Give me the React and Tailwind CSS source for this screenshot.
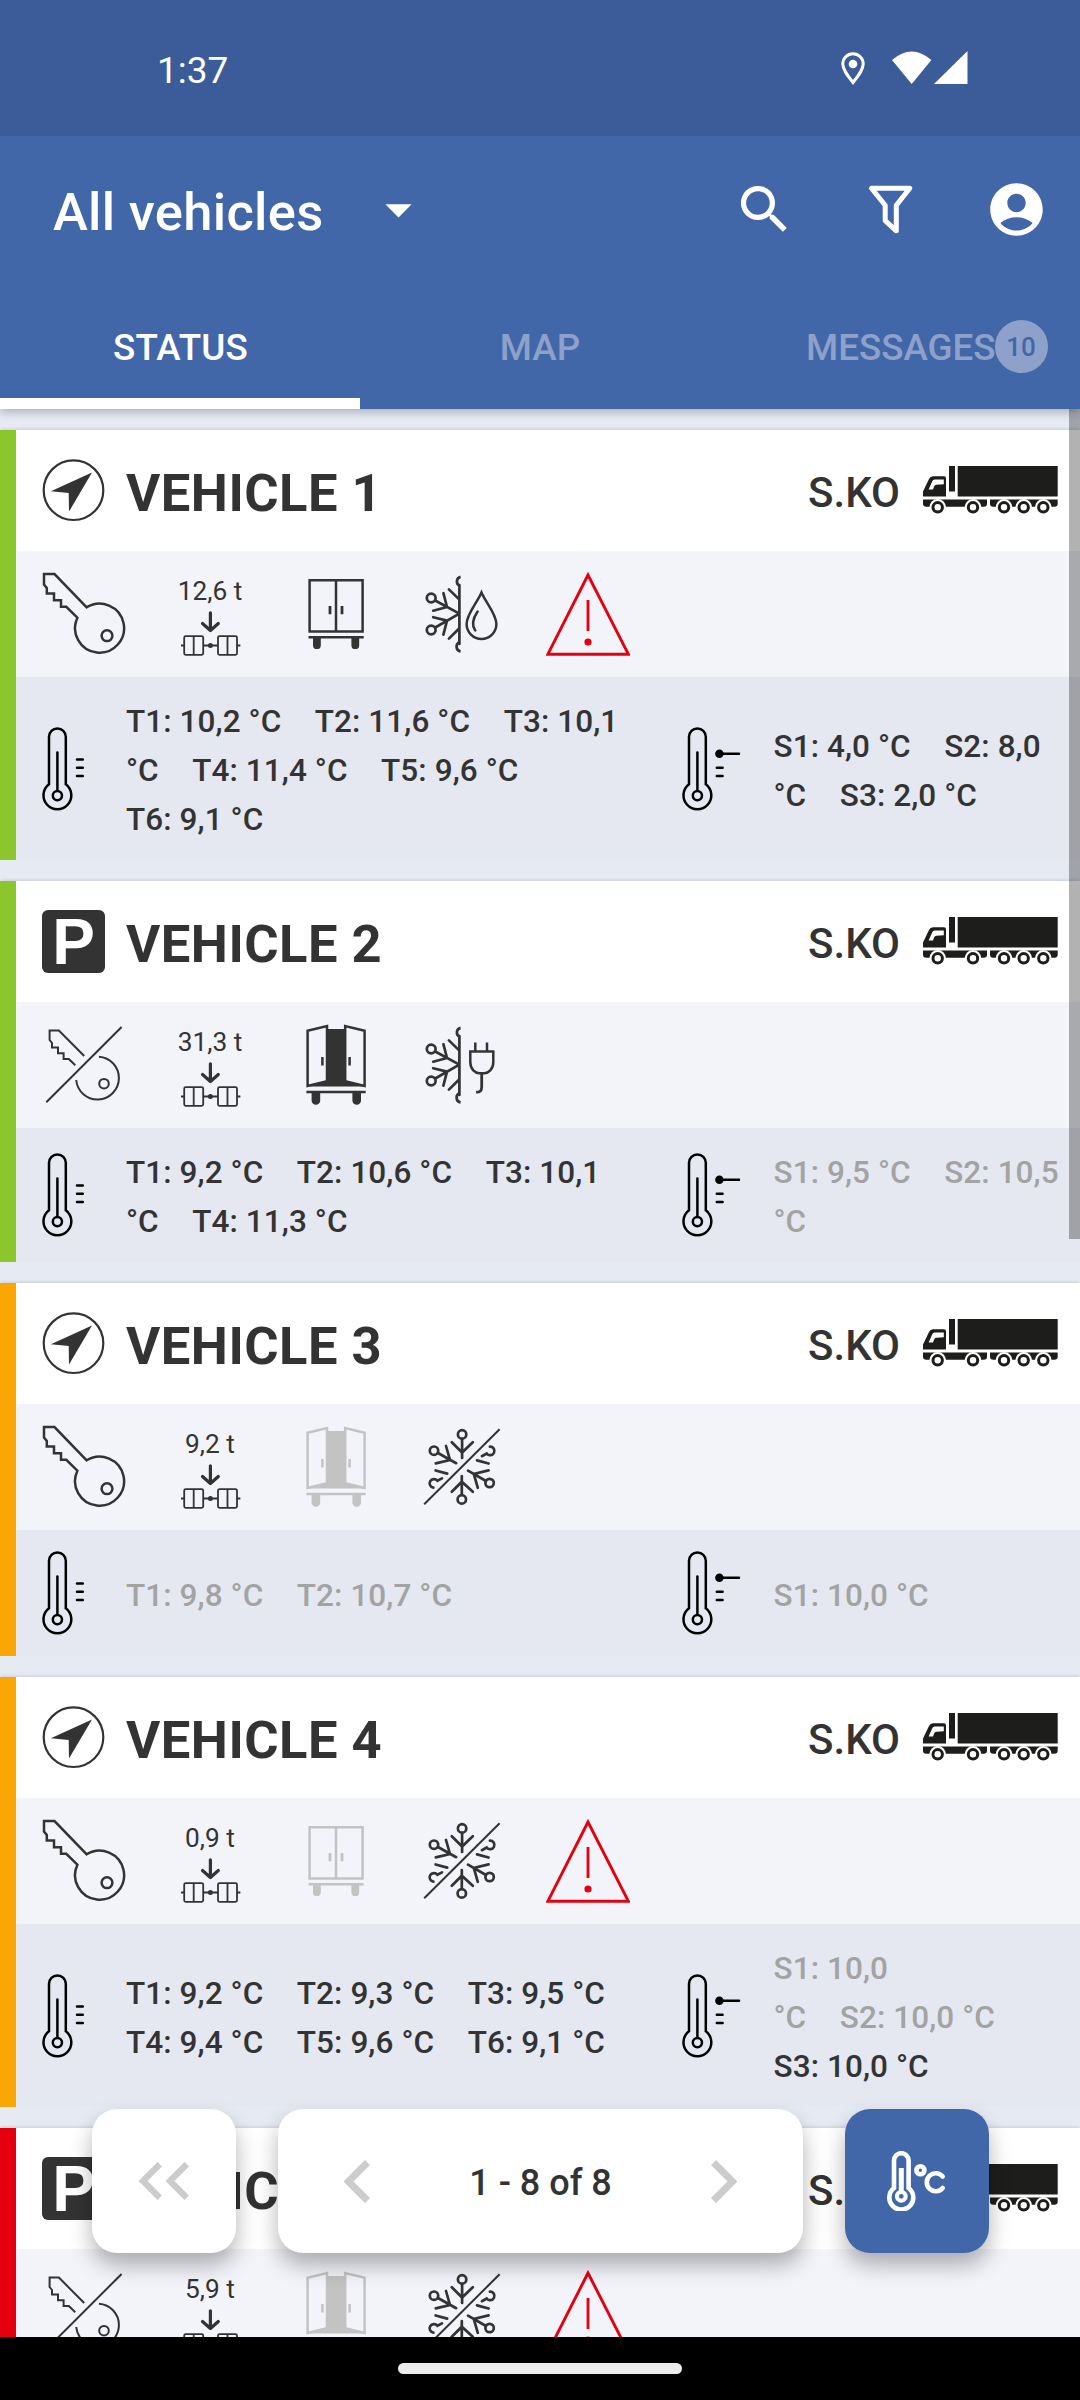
import clsx from "clsx";
import { MdAccountCircle, MdArrowDropDown, MdSearch } from "react-icons/md";

const vehicles = [
	{
		name: "VEHICLE 1",
		bar: "bg-[#8bc72c]",
		moving: true,
		keyOn: true,
		load: "12,6 t",
		door: "closed",
		cooling: "drop",
		warning: true,
		temps: [["T1: 10,2 °C", "T2: 11,6 °C", "T3: 10,1"], ["°C", "T4: 11,4 °C", "T5: 9,6 °C"], ["T6: 9,1 °C"]],
		setpoints: [["S1: 4,0 °C", "S2: 8,0"], ["°C", "S3: 2,0 °C"]],
	},
	{
		name: "VEHICLE 2",
		bar: "bg-[#8bc72c]",
		load: "31,3 t",
		door: "open",
		cooling: "plug",
		temps: [["T1: 9,2 °C", "T2: 10,6 °C", "T3: 10,1"], ["°C", "T4: 11,3 °C"]],
		setpoints: [["S1: 9,5 °C", "S2: 10,5"], ["°C"]],
		oldSetpoints: 2,
	},
	{
		name: "VEHICLE 3",
		bar: "bg-[#faa604]",
		moving: true,
		keyOn: true,
		load: "9,2 t",
		door: "open",
		doorOld: true,
		cooling: "off",
		temps: [["T1: 9,8 °C", "T2: 10,7 °C"]],
		oldTemps: 1,
		setpoints: [["S1: 10,0 °C"]],
		oldSetpoints: 1,
	},
	{
		name: "VEHICLE 4",
		bar: "bg-[#faa604]",
		moving: true,
		keyOn: true,
		load: "0,9 t",
		door: "closed",
		doorOld: true,
		cooling: "off",
		warning: true,
		temps: [["T1: 9,2 °C", "T2: 9,3 °C", "T3: 9,5 °C"], ["T4: 9,4 °C", "T5: 9,6 °C", "T6: 9,1 °C"]],
		setpoints: [["S1: 10,0"], ["°C", "S2: 10,0 °C"], ["S3: 10,0 °C"]],
		oldSetpoints: 2,
	},
	{
		name: "VEHICLE 5",
		bar: "bg-[#e5000f]",
		load: "5,9 t",
		door: "open",
		doorOld: true,
		cooling: "off",
		warning: true,
	},
];

const Icon = ({ children, className = "text-[#333333]" }) => (
	<svg
		viewBox="0 0 84 84"
		className={clsx("size-[84px] shrink-0", className)}
		fill="none"
		stroke="currentColor"
		strokeWidth="2.5"
	>
		{children}
	</svg>
);

const KeyIcon = () => (
	<Icon>
		<path d="M44.7 35.3 12.5 2.1H2V12.5L4.8 16v5.6h7.2v6.6h7v6.6h5.3L35.4 45.7A24.5 24.5 0 1 0 44.7 35.3Z" />
		<circle cx="65" cy="63.7" r="5.4" />
	</Icon>
);

const KeyOffIcon = () => (
	<Icon>
		<g strokeWidth="2">
			<path d="M42.2 33 16.9 7.6H7.6V17l2.4 3v4.6h6v5.6h5.6v5.8h5.2l6.5 6.3M56.9 33.7A21.4 21.4 0 1 1 34.2 57" />
			<circle cx="62" cy="60.7" r="4.8" />
			<path d="M79.6 4 4.3 79.3" />
		</g>
	</Icon>
);

const AxleIcon = () => (
	<svg viewBox="0 0 84 46" className="h-[46px] w-[84px] text-[#333333]" fill="none" stroke="currentColor" strokeWidth="1.8">
		<path d="M42.4 2.8v17M34.5 13.5l7.9 7 7.9-7" strokeWidth="3.2" strokeLinecap="round" strokeLinejoin="round" />
		<rect x="16.2" y="26.2" width="19" height="18.6" rx="1.5" />
		<rect x="50" y="26.2" width="19" height="18.6" rx="1.5" />
		<path d="M25.7 26v19M59.5 26v19M13 35.5h3M35 35.5h15M69 35.5h3.4" />
		<circle cx="42.4" cy="35.5" r="1.6" fill="currentColor" />
	</svg>
);

const DoorClosedIcon = ({ old }) => (
	<Icon className={old ? "text-[#c3c3c3]" : "text-[#333333]"}>
		<path d="M15.6 8.2h53v51.4h-53ZM42 8v52M14.5 65.2h55.2" />
		<path d="M36 34v8.2M48 34v8.2" strokeWidth="2.8" />
		<path d="M19 65h7.8v8.2a3.9 3.9 0 0 1-7.8 0ZM57.4 65h7.8v8.2a3.9 3.9 0 0 1-7.8 0Z" fill="currentColor" stroke="none" />
	</Icon>
);

const DoorOpenIcon = ({ old }) => (
	<Icon className={old ? "text-[#c3c3c3]" : "text-[#333333]"}>
		<path d="M33 6h18v52l20 5.6H13L33 58Z" fill="currentColor" stroke="none" />
		<path d="M13.6 7.8 33 3v55.2L13.6 63Z" className="fill-[#f3f4fa]" />
		<path d="M70.6 7.8 51.2 3v55.2L70.6 63Z" className="fill-[#f3f4fa]" />
		<path d="M12.4 69h59.3M28.4 34v8.4M55.6 34v8.4" />
		<path d="M17.6 69h8.6v8.4a4.3 4.3 0 0 1-8.6 0ZM58.4 69H67v8.4a4.3 4.3 0 0 1-8.6 0Z" fill="currentColor" stroke="none" />
	</Icon>
);

// Left half of the snowflake, shared by the defrost and mains icons
const HalfFlake = () => (
	<g strokeWidth="2.7" strokeLinecap="round">
		<path d="M39.4 13v59M39.4 41.6 15.2 28.5M39.4 41.6 15.2 55.5M27 35 23.4 21.2M27 35 13.2 38.7M27 48.6 23.4 62.6M27 48.6 13.2 45.2M28.9 17.4l10.5 10.2M28.9 66.6l10.5-10.4" />
		<path d="M40.6 4.9a4.7 4.7 0 0 0-1.1 8.8M40.6 79.3a4.7 4.7 0 0 1-1.1-9" strokeLinecap="butt" />
		<circle cx="11.2" cy="26" r="4.4" />
		<circle cx="11.2" cy="58" r="4.4" />
	</g>
);

const CoolingIcon = ({ type }) => {
	if (type === "off") {
		return (
			<Icon>
				<g strokeWidth="2.7" strokeLinecap="round">
					<circle cx="42.1" cy="9.4" r="4.2" />
					<circle cx="14" cy="25.7" r="4.2" />
					<circle cx="69.6" cy="58" r="4.2" />
					<circle cx="41.8" cy="74.4" r="4.2" />
					<path d="M42.1 14v19M31.8 17.2l10.3 10.3 10.7-10.3" />
					<path d="M18 28 36.2 38.2M26 21 30 35 15.8 38.4" />
					<path d="M66 56 48 45.6M57.8 62.8 53.8 49 68.6 45.4" />
					<path d="M41.8 69.5V51M31.8 66.8l10-10.1 11 10.1" />
					<path d="M57 35.4 68.6 38.5M61.9 31.2l4.8-2.7a4.3 4.3 0 1 0 3.2-6.9M15.6 45.5l11.6 3.1M22 53.4l-4.6 2.4a4.3 4.3 0 1 0-4 6.8" />
				</g>
				<path d="M79.6 4.3 4.2 79.3" strokeWidth="2" />
			</Icon>
		);
	}
	return (
		<Icon>
			<HalfFlake />
			{type === "drop" ? (
				<>
					<path d="M61.5 20.5C57 31 46.6 42 46.6 52a14.9 14.9 0 0 0 29.8 0C76.4 42 66 31 61.5 20.5Z" />
					<path d="M57.6 39.5C52.5 47 51.5 53 55.2 58.4" strokeLinecap="round" />
				</>
			) : (
				<>
					<path d="M55.3 19.5V28M67 19.5V28M50.3 28.6h23v10.6c0 7-5 11-9 11h-5c-4 0-9-4-9-11Z" />
					<path d="M61.7 50v14c0 3.5-1.5 5.3-5.6 5.2" strokeWidth="2.8" />
				</>
			)}
		</Icon>
	);
};

const WarningIcon = () => (
	<Icon className="text-[#e5000f]">
		<path d="M42 3 1.9 82.2h80.4Z" strokeWidth="2.9" />
		<path d="M42 28v31" strokeWidth="2.8" />
		<circle cx="42" cy="70" r="3.6" fill="currentColor" stroke="none" />
	</Icon>
);

const Thermometer = ({ setpoint }) => (
	<svg
		viewBox="0 0 62 84"
		className="h-[84px] w-[62px] shrink-0 text-black"
		fill="none"
		stroke="currentColor"
		strokeWidth="2.5"
		strokeLinecap="round"
	>
		<path d="M7 57.3V9.8a8.4 8.4 0 0 1 16.8 0v47.5a13.9 13.9 0 1 1-16.8 0Z" />
		<path d="M15.4 25.5V63" />
		<circle cx="15.4" cy="68.6" r="4.6" />
		{setpoint ? (
			<>
				<circle cx="37.4" cy="26.7" r="3" fill="currentColor" />
				<path d="M38 26.7h19M34.8 40.7h5.8M34.8 49h5.8" />
			</>
		) : (
			<path d="M35 32.4h5.8M35 40.7h5.8M35 49h5.8" />
		)}
	</svg>
);

const Truck = () => (
	<svg viewBox="0 0 135 48" className="mb-px h-12 w-[135px] shrink-0" fill="#1d1d1b">
		<path d="M34.7 0h100v30.6h-100ZM26 0h6v25.4h-6Z" />
		<path d="M0 30.6v-5L6 13q1.2-2.7 4-2.7h11q2 0 2 2v18.3Z" />
		<path d="M0 33.4h64v4q0 3.3-3.3 3.3H3.3Q0 40.7 0 37.4ZM67 33.4h67.7v4q0 3.3-3.3 3.3H70.3Q67 40.7 67 37.4Z" />
		<path d="M5.6 23.6 9.4 15q.6-1.6 2.4-1.6h9v4.8l-7.5.6q-1.5.2-2.2 1.8L10 23.6Z" fill="#fff" />
		{[14.7, 50, 81, 100.7, 120.3].map((x) => (
			<g key={x}>
				<circle cx={x} cy="41.3" r="8.3" fill="#fff" />
				<circle cx={x} cy="41.3" r="4.7" fill="#fff" stroke="#1d1d1b" strokeWidth="3" />
			</g>
		))}
	</svg>
);

const StateBadge = ({ moving }) =>
	moving ? (
		<svg viewBox="0 0 63 63" className="size-[63px] shrink-0 text-[#333333]">
			<circle cx="31.5" cy="31.2" r="29.8" fill="none" stroke="currentColor" strokeWidth="2.2" />
			<path d="M50 13.4 8.9 32.2l17.8 1.9L27 52.6Z" fill="currentColor" />
		</svg>
	) : (
		<div className="flex size-[63px] shrink-0 items-center justify-center rounded-[6px] bg-[#333333] font-['Liberation_Sans',sans-serif] text-[64px] leading-none font-bold text-white">
			P
		</div>
	);

const Readings = ({ lines, old = 0 }) => (
	<div className="-mb-[2px] pt-[2px] text-[31.5px] leading-[49px] font-medium tracking-[0.08px] whitespace-nowrap">
		{lines.map((line, i) => (
			<div key={i} className={clsx("flex gap-[33.5px]", i < old ? "text-[#a3a3a3]" : "text-[#333333]")}>
				{line.map((item) => (
					<span key={item}>{item}</span>
				))}
			</div>
		))}
	</div>
);

const VehicleCard = ({ vehicle }) => (
	<div className="flex shrink-0 shadow-[0_-2px_3px_-1px_rgba(0,0,0,0.12)]">
		<div className={clsx("w-4 shrink-0", vehicle.bar)} />
		<div className="flex-1">
			<div className="flex h-[121px] items-center bg-white pr-[22px] pl-[26px]">
				<StateBadge moving={vehicle.moving} />
				<h2 className="ml-[21px] flex-1 pt-[5px] text-[52.5px] leading-none font-bold tracking-[0.5px] text-[#333333]">
					{vehicle.name}
				</h2>
				<span className="mr-[23px] pt-[5px] text-[42px] leading-none font-medium text-[#333333]">S.KO</span>
				<Truck />
			</div>
			<div className="flex h-[126px] items-center gap-[42px] bg-[#f3f4fa] pl-[26px]">
				{vehicle.keyOn ? <KeyIcon /> : <KeyOffIcon />}
				<div className="flex h-[84px] w-[84px] flex-col items-center justify-between">
					<span className="text-[26.25px] leading-[38px] whitespace-nowrap text-[#333333]">{vehicle.load}</span>
					<AxleIcon />
				</div>
				{vehicle.door === "open" ? <DoorOpenIcon old={vehicle.doorOld} /> : <DoorClosedIcon old={vehicle.doorOld} />}
				<CoolingIcon type={vehicle.cooling} />
				{vehicle.warning && <WarningIcon />}
			</div>
			{vehicle.temps && (
				<div className="flex min-h-[126px] bg-[#e5e8f0] py-[18px] pl-[26px]">
					<div className="flex w-[640px] items-center gap-[22px]">
						<Thermometer />
						<Readings lines={vehicle.temps} old={vehicle.oldTemps} />
					</div>
					<div className="flex items-center gap-[29.5px]">
						<Thermometer setpoint />
						<Readings lines={vehicle.setpoints} old={vehicle.oldSetpoints} />
					</div>
				</div>
			)}
		</div>
	</div>
);

const StatusBar = () => (
	<div className="relative z-20 flex h-[136px] items-center justify-between bg-[#3b5c98] pr-[112px] pl-[157px] text-white">
		<span className="pt-[4px] text-[37px] leading-none">1:37</span>
		<div className="flex items-center gap-[27px]">
			<svg viewBox="0 0 24 33" className="h-[33px] w-6" fill="none" stroke="currentColor" strokeWidth="3">
				<path d="M12 30.5C6 23 1.8 17.5 1.8 12a10.2 10.2 0 0 1 20.4 0C22.2 17.5 18 23 12 30.5Z" />
				<circle cx="12" cy="12" r="4.3" fill="currentColor" stroke="none" />
			</svg>
			<svg viewBox="0 0 76 34" className="h-[34px] w-[76px]" fill="currentColor">
				<path d="M0 9Q19.7-8 39.4 9L19.7 33Z" />
				<path d="M75.5 0v33H42Z" />
			</svg>
		</div>
	</div>
);

const Navbar = () => (
	<div className="relative z-10 flex h-[273px] flex-col bg-[#4267a8] text-white shadow-[0_2px_10px_rgba(0,0,0,0.3)]">
		<div className="flex h-[147px] items-center pr-8 pl-[53px]">
			<h1 className="pt-[5px] text-[52.5px] leading-none font-medium tracking-[0.3px]">All vehicles</h1>
			<MdArrowDropDown className="ml-[43px] size-[63px]" />
			<div className="ml-auto flex items-center gap-[63px]">
				<MdSearch className="size-[63px]" />
				<svg viewBox="0 0 63 63" className="size-[63px]" fill="none" stroke="currentColor" strokeWidth="5">
					<path d="M12.5 10.3h38.3L37.3 27.2v25.6L26.2 42.6V27.2Z" strokeLinejoin="round" />
				</svg>
				<MdAccountCircle className="size-[63px]" />
			</div>
		</div>
		<div className="grid flex-1 grid-cols-3 text-[36.75px] leading-none font-medium">
			<div className="flex items-center justify-center border-b-[11px] border-white pt-[15px] pl-px tracking-[0.2px]">
				STATUS
			</div>
			<div className="flex items-center justify-center pt-[4px] text-[#8da1ca]">MAP</div>
			<div className="flex items-center pl-[86px] text-[#8da1ca]">
				<span className="pt-[4px]">MESSAGES</span>
				<span className="-ml-px flex size-[53px] items-center justify-center rounded-full bg-[#8da1ca] pt-[2px] text-[26px] text-[#4267a8]">
					10
				</span>
			</div>
		</div>
	</div>
);

const Chevron = ({ className, flip }) => (
	<svg viewBox="0 0 26 43" className={className} fill="none" stroke="#cccccc" strokeWidth="7.2">
		<path d={flip ? "M2.5 2.5 21.5 21.5 2.5 40.5" : "M23.5 2.5 4.5 21.5 23.5 40.5"} />
	</svg>
);

const Pager = () => (
	<div className="absolute top-[2109px] left-[92px] z-20 flex gap-[42px]">
		<button className="flex size-36 items-center justify-center gap-1 rounded-[25px] bg-white shadow-[0_12px_22px_rgba(0,0,0,0.3)]">
			<Chevron className="h-[38px] w-[23px]" />
			<Chevron className="h-[38px] w-[23px]" />
		</button>
		<div className="flex h-36 w-[525px] items-center justify-between rounded-[25px] bg-white px-[66px] shadow-[0_12px_22px_rgba(0,0,0,0.3)]">
			<Chevron className="h-[43px] w-[26px]" />
			<span className="pt-[4px] text-[36px] leading-none font-medium text-[#333333]">1 - 8 of 8</span>
			<Chevron className="h-[43px] w-[26px]" flip />
		</div>
		<button className="flex size-36 items-center justify-center rounded-[25px] bg-[#4267a8] pr-[2px] shadow-[0_12px_22px_rgba(0,0,0,0.3)]">
			<svg viewBox="0 0 59 60" className="h-[60px] w-[59px] text-white" fill="none" stroke="currentColor" strokeWidth="4.6">
				<path d="M7 37V9.5a7.3 7.3 0 0 1 14.6 0V37a12 12 0 1 1-14.6 0Z" />
				<path d="M14.3 17v24" strokeWidth="5" />
				<circle cx="14.3" cy="45.3" r="4.4" strokeWidth="4" />
				<circle cx="33.4" cy="19.3" r="4" />
				<path d="M55.7 25.5a9 9 0 1 0 0 11.5" strokeLinecap="round" />
			</svg>
		</button>
	</div>
);

const App = () => {
	return (
		<div className="relative flex h-[2400px] w-[1080px] flex-col overflow-hidden bg-[#e5eaf3] font-[Roboto,sans-serif]">
			<StatusBar />
			<Navbar />
			<div className="flex flex-1 flex-col gap-[21px] overflow-hidden pt-[21px]">
				{vehicles.map((vehicle) => (
					<VehicleCard key={vehicle.name} vehicle={vehicle} />
				))}
			</div>
			<div className="flex h-[63px] shrink-0 items-center justify-center bg-black">
				<div className="h-[11px] w-[284px] rounded-full bg-[#ececec]" />
			</div>
			<div className="absolute top-[409px] right-0 h-[830px] w-[11px] bg-black/30" />
			<Pager />
		</div>
	);
};

export default App;
